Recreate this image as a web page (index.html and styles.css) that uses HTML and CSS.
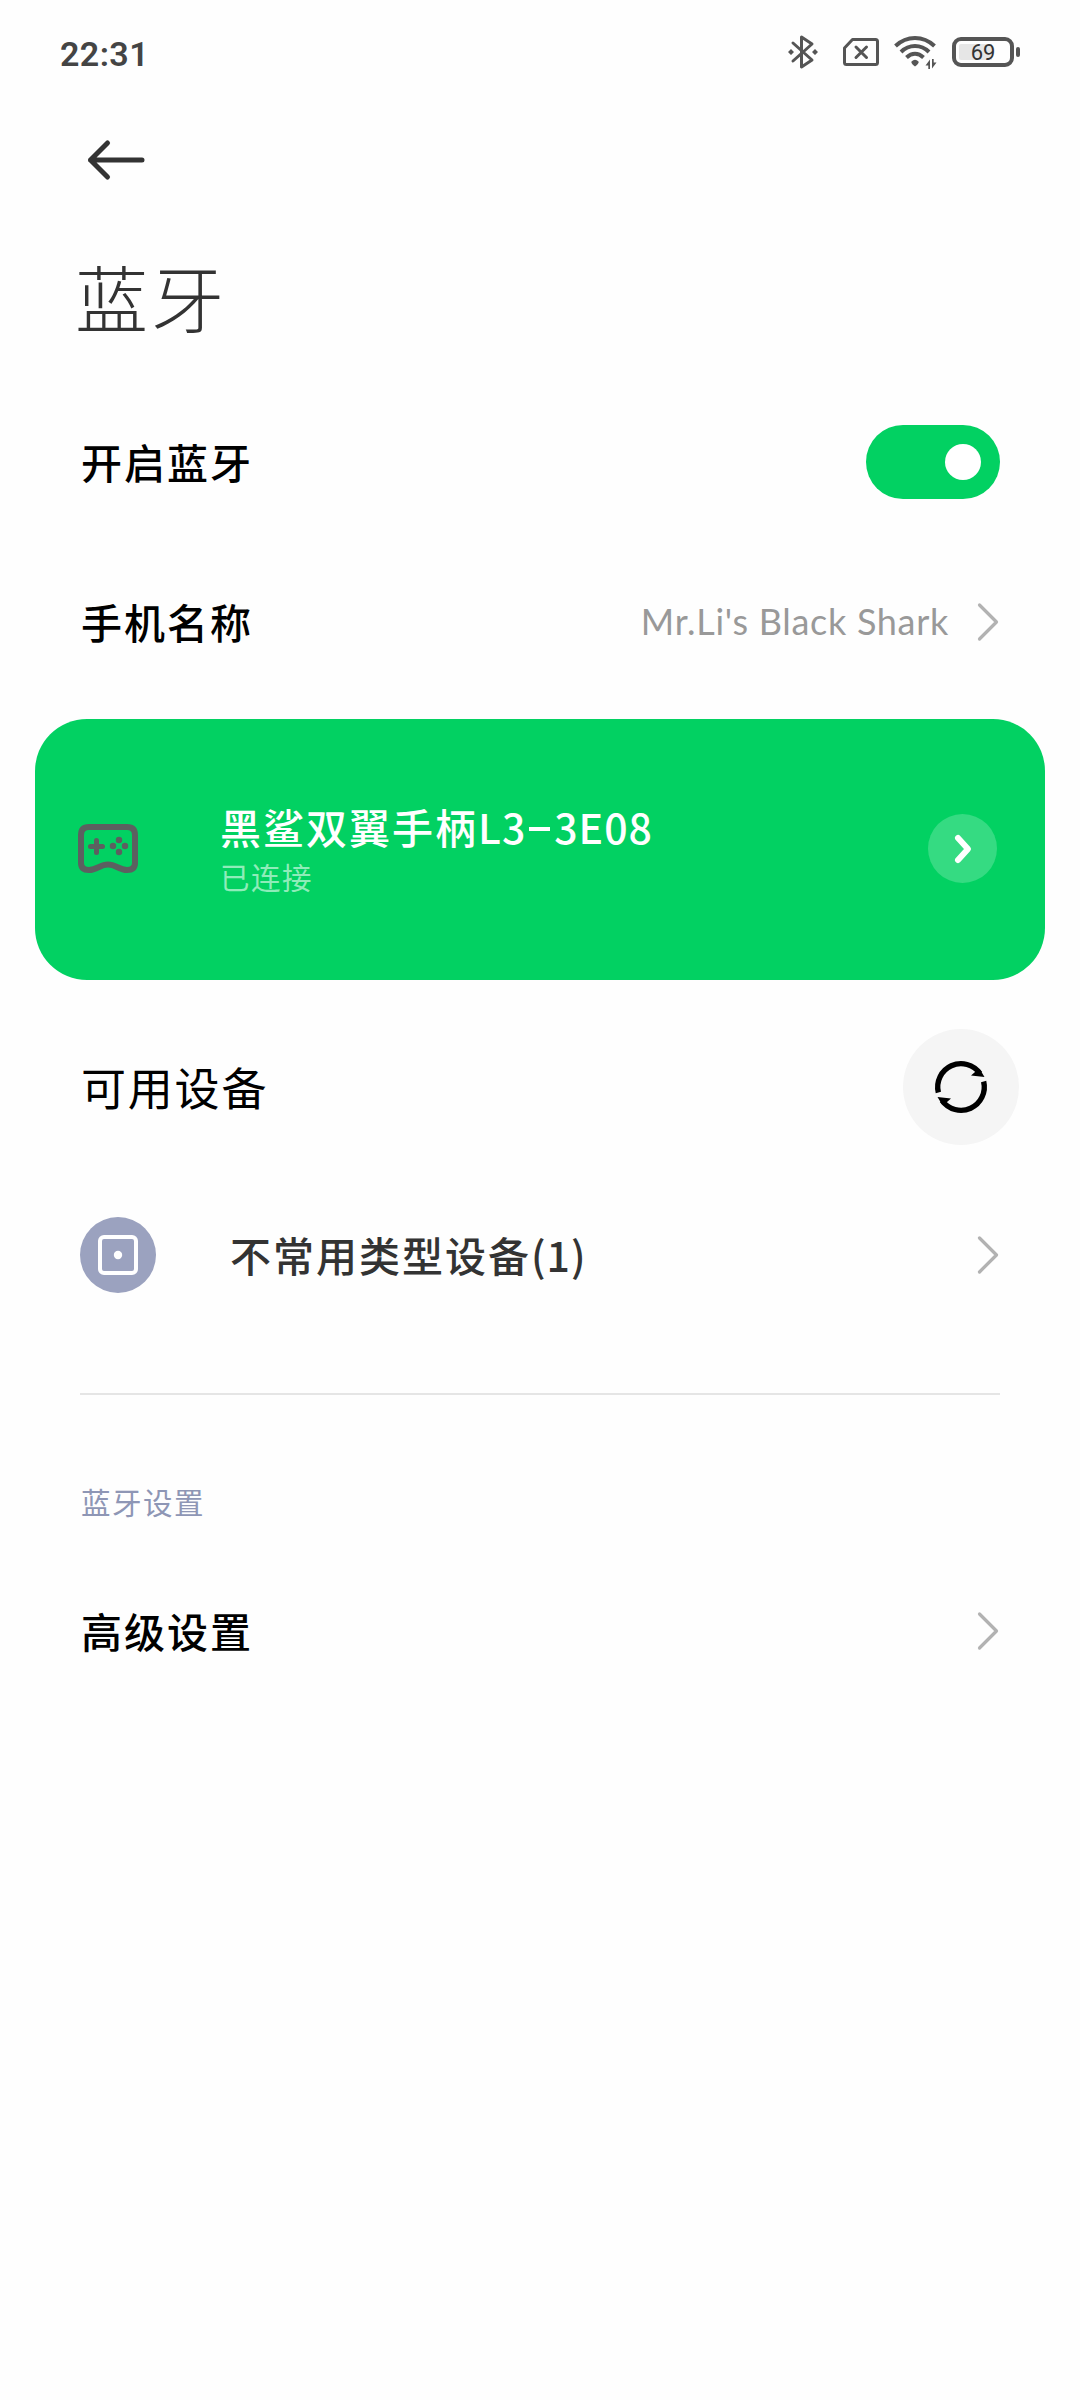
FILE: index.html
```html
<!doctype html>
<html lang="zh-CN">
<head>
    <meta charset="UTF-8">
    <meta name="viewport" content="width=device-width, initial-scale=1.0">
    <title>蓝牙</title>
    <link rel="stylesheet" href="styles.css">
</head>
<body>
<header class="status-bar">
    <span class="time">22:31</span>
    <div class="status-icons">
        <svg class="bluetooth" width="30" height="36" viewBox="0 0 30 36">
            <path d="M5 9 24 26 13.500 33V3L24 10 5 27" fill="none" stroke="#555" stroke-width="3" stroke-linecap="round" stroke-linejoin="round"/>
            <path d="M0 18 3 15 6 18 3 21ZM24 18 27 15 30 18 27 21Z" fill="#555"/>
        </svg>
        <svg class="sim" width="36" height="28" viewBox="0 0 36 28">
            <path d="M9.500 1.500H32.500Q34.500 1.500 34.500 3.500V24.500Q34.500 26.500 32.500 26.500H3.500Q1.500 26.500 1.500 24.500V10Z" fill="none" stroke="#555" stroke-width="3" stroke-linejoin="round"/>
            <path d="M13 9 23.500 19.500M23.500 9 13 19.500" fill="none" stroke="#555" stroke-width="3" stroke-linecap="round"/>
        </svg>
        <svg class="wifi" width="44" height="34" viewBox="0 0 44 34">
            <g fill="none" stroke="#555" stroke-width="4">
                <path d="M1.500 11Q10 3 21 3T40.500 11"/>
                <path d="M7 17Q13 11 21 11T35 17"/>
                <path d="M12.500 22.500Q16.500 18.800 21 18.800T29.500 22.500"/>
            </g>
            <path d="M17.500 26.500Q21 23 24.500 26.500Q25.500 28 21 31.500Q16.500 28 17.500 26.500Z" fill="#555"/>
            <path d="M36 24.500V34H34.300V30.500H31.500ZM38 33.500V24H39.700V27.500H42.500Z" fill="#555"/>
        </svg>
        <div class="battery"><span class="level">69</span></div>
    </div>
</header>

<nav class="nav">
    <svg width="58" height="40" viewBox="0 0 58 40">
        <path d="M20.500 3 3.500 20 20.500 37M3.500 20H55" fill="none" stroke="#333" stroke-width="5" stroke-linecap="round" stroke-linejoin="round"/>
    </svg>
</nav>

<h1 class="title">蓝牙</h1>

<main>
    <div class="row row-switch">
        <span class="label">开启蓝牙</span>
        <span class="switch"></span>
    </div>

    <div class="row row-name">
        <span class="label">手机名称</span>
        <span class="value">Mr.Li's Black Shark</span>
        <svg class="chevron" width="22" height="38" viewBox="0 0 22 38">
            <path d="M1.500 2 18.500 19 1.500 36"/>
        </svg>
    </div>

    <section class="device">
        <svg class="gamepad" width="60" height="50" viewBox="0 0 60 50">
            <path d="M11 3H49Q57 3 57 11V39Q57 46 49 46C41 46 38 40.500 30 40.500S19 46 11 46Q3 46 3 39V11Q3 3 11 3Z" fill="none" stroke="#5c6060" stroke-width="6"/>
            <path d="M12.500 22.500H24.500M18.500 16.500V28.500" stroke="#5c6060" stroke-width="5" stroke-linecap="round"/>
            <g fill="#5c6060">
                <circle cx="41" cy="16" r="3.200"/>
                <circle cx="35" cy="22" r="3.200"/>
                <circle cx="47" cy="22" r="3.200"/>
                <circle cx="41" cy="28" r="3.200"/>
            </g>
        </svg>
        <div class="device-info">
            <span class="device-name">黑鲨双翼手柄<span class="model">L3<i class="dash"></i>3E08</span></span>
            <span class="device-state">已连接</span>
        </div>
        <span class="device-more">
            <svg width="18" height="30" viewBox="0 0 18 30">
                <path d="M4 4 14 15 4 26" fill="none" stroke="#fff" stroke-width="6" stroke-linecap="round" stroke-linejoin="round"/>
            </svg>
        </span>
    </section>

    <div class="row row-available">
        <span class="heading">可用设备</span>
        <span class="refresh">
            <svg width="52" height="52" viewBox="0 0 52 52">
                <path d="M3.360 31.500A23.300 23.300 0 0 1 45 12.500M48.640 20.500A23.300 23.300 0 0 1 7 39.500" fill="none" stroke="#000" stroke-width="5.400"/>
                <path d="M45 8.500 49.500 16 36 14.500 40 11ZM7 43.500 2.500 36 16 37.500 12 41Z" fill="#000"/>
            </svg>
        </span>
    </div>

    <div class="row row-rare">
        <span class="rare-icon">
            <svg width="40" height="40" viewBox="0 0 40 40">
                <rect x="2" y="2" width="36" height="36" rx="4" fill="none" stroke="#fff" stroke-width="4"/>
                <circle cx="20" cy="20" r="4.200" fill="#fff"/>
            </svg>
        </span>
        <span class="label rare-label">不常用类型设备<span class="count">(1)</span></span>
        <svg class="chevron" width="22" height="38" viewBox="0 0 22 38">
            <path d="M1.500 2 18.500 19 1.500 36"/>
        </svg>
    </div>

    <hr class="divider">

    <h2 class="caption">蓝牙设置</h2>

    <div class="row row-advanced">
        <span class="label">高级设置</span>
        <svg class="chevron" width="22" height="38" viewBox="0 0 22 38">
            <path d="M1.500 2 18.500 19 1.500 36"/>
        </svg>
    </div>
</main>
</body>
</html>
```
FILE: styles.css
```css
* {
    box-sizing: border-box;
}

body {
    margin: 0;
    min-height: 2400px;
    background: #fefefe;
    color: #000;
    font-family: "Noto Sans CJK SC", sans-serif;
}

svg {
    display: block;
    flex: none;
    overflow: visible;
}

.status-bar {
    display: flex;
    align-items: center;
    justify-content: space-between;
    height: 104px;
    padding: 0 60px;
}

.time {
    padding-top: 3px;
    color: #444;
    font: 600 34px/40px Roboto, sans-serif;
    letter-spacing: 0.4px;
}

.status-icons {
    display: flex;
    align-items: center;
}

.sim {
    margin-left: 25px;
}

.wifi {
    margin-left: 15px;
}

.battery {
    position: relative;
    width: 62px;
    height: 30px;
    margin: 0 6px 0 14px;
    padding: 3px;
    border: 4px solid #555;
    border-radius: 9px;

    /* the small contact on the right end */
    &::after {
        content: "";
        position: absolute;
        top: 6px;
        right: -10px;
        width: 4px;
        height: 10px;
        border-radius: 2px;
        background: #555;
    }
}

.level {
    display: block;
    height: 16px;
    background: linear-gradient(90deg, #e6e6e6 69%, transparent 69%);
    border-radius: 2px;
    color: #333;
    font: 400 22px/18px Roboto, sans-serif;
    text-align: center;
}

.nav {
    display: flex;
    align-items: center;
    height: 112px;
    padding-left: 87px;
}

.title {
    height: 168px;
    margin: 0;
    padding-left: 75px;
    color: #333;
    font-size: 73px;
    font-weight: 300;
    line-height: 159px;
    letter-spacing: 3px;
}

.row {
    display: flex;
    align-items: center;
    padding: 0 80px;
}

.label {
    flex: 1;
    padding: 0 0 3px 1px;
    font-size: 41px;
    font-weight: 500;
    line-height: 60px;
    letter-spacing: 2px;
}

.row-switch {
    height: 156px;
}

.switch {
    width: 134px;
    height: 74px;
    padding: 19px;
    border-radius: 37px;
    background: #02d162;

    &::after {
        content: "";
        display: block;
        width: 36px;
        height: 36px;
        margin-left: auto;
        border-radius: 50%;
        background: #fff;
    }
}

.row-name {
    height: 164px;
}

.value {
    padding-bottom: 2px;
    color: #999;
    font: 400 36px/48px Lato, sans-serif;
    letter-spacing: 0.7px;
}

.chevron {
    margin-left: 29px;

    path {
        fill: none;
        stroke: #b2b2b2;
        stroke-width: 3.2;
        stroke-linecap: round;
        stroke-linejoin: round;
    }
}

.device {
    display: flex;
    align-items: center;
    height: 261px;
    margin: 15px 35px 0;
    padding: 0 48px 0 43px;
    border-radius: 52px;
    background: #02d162;
    color: #fff;
}

.gamepad,
.device-more {
    margin-bottom: 2px;
}

.device-info {
    display: flex;
    flex: 1;
    flex-direction: column;
    margin-left: 82px;
}

.device-name {
    font-size: 41px;
    font-weight: 500;
    line-height: 52px;
    letter-spacing: 2px;
}

.model {
    letter-spacing: 1px;
}

.dash {
    display: inline-block;
    width: 21px;
    height: 4px;
    margin: 0 4px 13px 3px;
    background: #fff;
}

.device-state {
    color: #8eecb9;
    font-size: 29.5px;
    line-height: 48px;
    letter-spacing: 1.5px;
}

.device-more {
    display: grid;
    place-items: center;
    width: 69px;
    height: 69px;
    border-radius: 50%;
    background: #35db82;
}

.row-available {
    height: 214px;
    padding-right: 61px;
}

.heading {
    flex: 1;
    padding-left: 1px;
    font-size: 45px;
    line-height: 60px;
    letter-spacing: 1.8px;
}

.refresh {
    display: grid;
    place-items: center;
    width: 116px;
    height: 116px;
    border-radius: 50%;
    background: #f5f5f5;
}

.row-rare {
    height: 122px;
}

.rare-icon {
    display: grid;
    place-items: center;
    width: 76px;
    height: 76px;
    border-radius: 50%;
    background: #9ba2bf;
}

.rare-label {
    margin-left: 73px;
    color: #333;
}

.count {
    letter-spacing: 1px;
}

.divider {
    height: 2px;
    margin: 77px 80px 0;
    border: 0;
    background: #e5e5e5;
}

.caption {
    height: 84px;
    margin: 66px 0 0;
    padding-left: 81px;
    color: #8e96b5;
    font-size: 29.5px;
    font-weight: 400;
    line-height: 81px;
    letter-spacing: 1.5px;
}

.row-advanced {
    height: 172px;
}
```
